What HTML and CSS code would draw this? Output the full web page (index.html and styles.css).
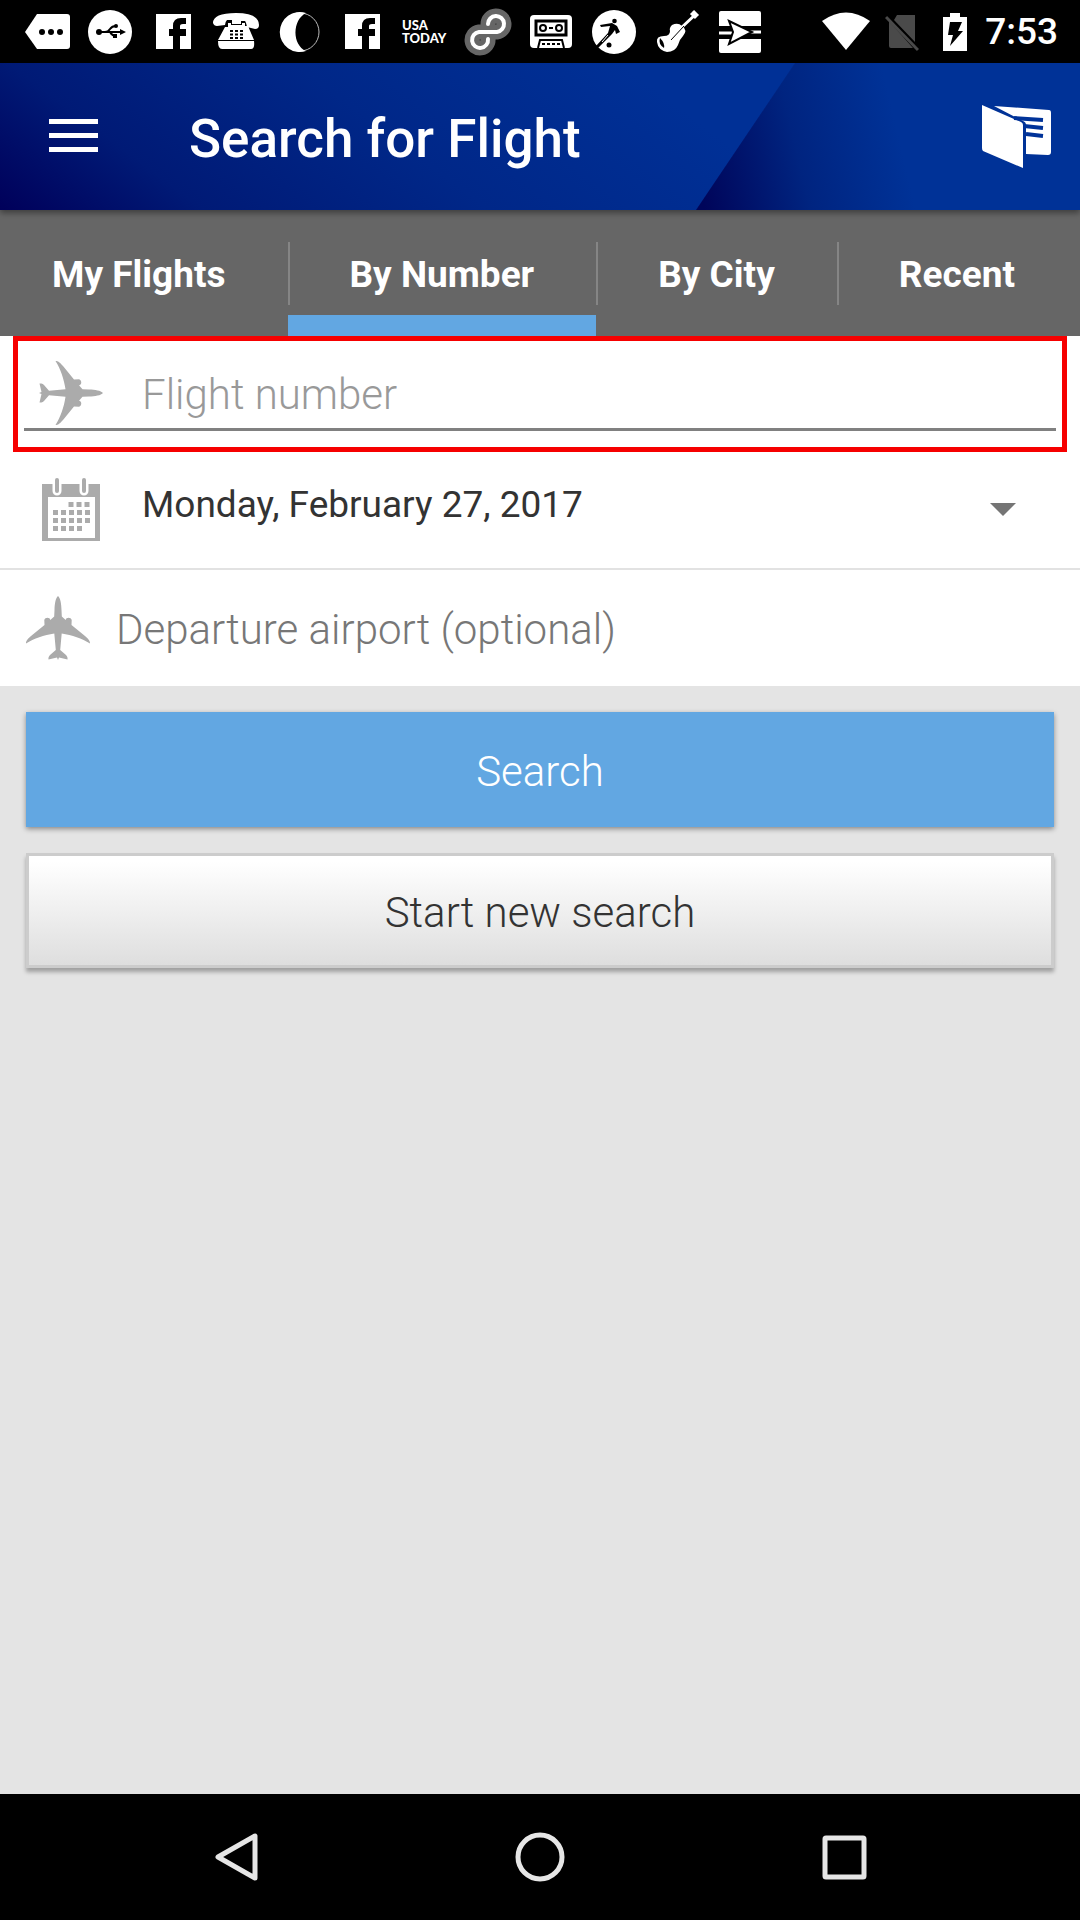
FILE: index.html
```html
<!DOCTYPE html>
<html lang="en">
<head>
<meta charset="utf-8">
<meta name="viewport" content="width=device-width, initial-scale=1">
<title>Search for Flight</title>
<link rel="stylesheet" href="styles.css">
</head>
<body>
<svg class="symbols" aria-hidden="true">
  <symbol id="plane" viewBox="0 0 64 64">
    <path d="M32 0C29.500 2 28.700 8 28.500 14L28.200 20.500 24.300 24C24 21 19 21 18.300 24L18.500 29 5 40C1 43.500 0 45 0 47.500 8 42.500 18 39 28.300 37.500L29.800 54 24 59C22.500 60.500 22.300 62 22.500 63.500L31 61.500 32 64 33 61.500 41.500 63.500C41.700 62 41.500 60.500 40 59L34.200 54 35.700 37.500C46 39 56 42.500 64 47.500 64 45 63 43.500 59 40L45.500 29 45.700 24C45 21 40 21 39.700 24L35.800 20.500 35.500 14C35.300 8 34.500 2 32 0Z"/>
  </symbol>
  <symbol id="social" viewBox="0 0 63 63">
    <path fill="#fff" d="M14 14H49V49H38V36H44V29H38V26Q38 24 41 24H44V18H39Q31 18 31 26V29H27V36H31V49H14Z"/>
  </symbol>
</svg>

<div class="status-bar">
  <div class="notifications">
    <svg class="notice" viewBox="0 0 63 63"><path fill="#fff" d="M21 14H51Q54 14 54 17V46Q54 49 51 49H21L9 32Z"/><g fill="#000"><circle cx="26" cy="32" r="3"/><circle cx="35" cy="32" r="3"/><circle cx="44" cy="32" r="3"/></g></svg>
    <svg class="notice" viewBox="0 0 63 63"><circle cx="31" cy="32" r="22" fill="#fff"/><g fill="none" stroke="#000" stroke-width="2"><path d="M20 32H42M26 32Q29 32 31 29T37 26M31 32Q33 36 38 36"/></g><circle cx="20" cy="32" r="3"/><circle cx="37" cy="26" r="2"/><path d="M41 29L47 32 41 35ZM34 34H38V38H34Z"/></svg>
    <svg class="notice"><use href="#social"/></svg>
    <svg class="notice" viewBox="0 0 63 63"><path fill="#fff" d="M8 23Q8 13 31 13T54 25Q54 29 50 29L42 27Q41 22 40 21H36V24H27V20H22Q20 22 20 25L12 26Q9 26 8 23ZM20 27H23V23H26V25H37V23H40V26H43L49 40H13ZM13 41H49Q50 49 46 49H17Q13 49 13 41Z"/><path d="M25 31H38M25 34.500H38M25 38H38" stroke="#000" stroke-width="2" stroke-dasharray="3 2"/></svg>
    <svg class="notice" viewBox="0 0 63 63"><circle cx="32" cy="32" r="19" fill="#000" stroke="#bbb"/><path fill="#fff" d="M38 13A20 20 0 1 0 38 51C24 45 24 20 38 13Z"/></svg>
    <svg class="notice"><use href="#social"/></svg>
    <div class="notice notice-text">USA<br>TODAY</div>
    <svg class="notice" viewBox="0 0 63 63"><g fill="none" stroke-linecap="round"><path stroke="#666" stroke-width="15" d="M31 39A8 8 0 1 1 22 32H40A8 8 0 1 0 31 24"/><path stroke="#fff" stroke-width="4" d="M31 39A8 8 0 1 1 22 32H40A8 8 0 1 0 31 24"/></g></svg>
    <svg class="notice" viewBox="0 0 63 63"><rect x="10" y="15" width="42" height="33" rx="4" fill="#fff"/><g fill="none" stroke="#000" stroke-width="2"><rect x="16" y="21" width="30" height="14" stroke-width="3"/><circle cx="23" cy="28" r="3"/><circle cx="39" cy="28" r="3"/><path d="M29 28H33M18 48L20 40H42L44 48"/><path d="M22 44H40" stroke-dasharray="3 2"/></g></svg>
    <svg class="notice" viewBox="0 0 63 63"><circle cx="31" cy="32" r="22" fill="#fff"/><circle cx="31.500" cy="21" r="2.300"/><circle cx="26" cy="45" r="2.500"/><path d="M17 25L29 23 34 26 37 32 33 34 32 30 29 34 15 48 13 46 25 33 27 26 18 27Z"/><path stroke="#fff" d="M19 42L25 35"/></svg>
    <svg class="notice" viewBox="0 0 63 63"><path stroke="#fff" stroke-width="3" d="M34 29L51 13M45 13L50 18M47 11L52 16"/><path fill="#fff" d="M26 25Q32 22 36 26 42 30 37 36 33 40 32 45 29 52 21 52 12 50 11 42 10 36 18 36 24 36 24 31 23 28 26 25Z"/><path d="M14 38Q12 44 18 48 19 43 14 38" /><path stroke="#000" d="M25 40L38 26"/></svg>
    <svg class="notice" viewBox="0 0 63 63"><rect x="10" y="11" width="42" height="42" rx="2" fill="#fff"/><path d="M10 26H52V39H10Z"/><path stroke="#fff" stroke-width="3" d="M10 33H24M40 32H52"/><path fill="#fff" stroke="#000" stroke-width="2" d="M20 21L43 32 20 44 24 32Z"/></svg>
  </div>
  <div class="system">
    <svg class="system-wifi" viewBox="0 0 48 40"><path fill="#fff" d="M0 9Q24-8 48 9L24 38Z"/></svg>
    <svg class="system-sim" viewBox="0 0 34 40"><path fill="#4a4a4a" d="M12 3H30V30L9 8ZM4 9L28 36H6Q4 36 4 34Z"/><path stroke="#4a4a4a" stroke-width="3" d="M1 5L33 38"/></svg>
    <svg class="system-battery" viewBox="0 0 24 40"><path fill="#fff" d="M7 1H17V5H24V39H0V5H7Z"/><path d="M7 10H19L15 19H20L7 34 10 23H5Z"/></svg>
    <time class="clock">7:53</time>
  </div>
</div>

<header class="app-bar">
  <svg class="app-bar-art" viewBox="0 0 1080 147" preserveAspectRatio="none" aria-hidden="true">
    <defs>
      <linearGradient id="left-blue" gradientUnits="userSpaceOnUse" x1="0" y1="147" x2="294" y2="-245"><stop offset="0" stop-color="#00005a"/><stop offset=".25" stop-color="#001a76"/><stop offset=".6" stop-color="#002788"/><stop offset="1" stop-color="#003096"/></linearGradient>
      <linearGradient id="right-blue" gradientUnits="userSpaceOnUse" x1="705" y1="147" x2="905" y2="100"><stop offset="0" stop-color="#00055a"/><stop offset=".5" stop-color="#002480"/><stop offset="1" stop-color="#003297"/></linearGradient>
    </defs>
    <path fill="url(#left-blue)" d="M0 0H796L697 147H0Z"/>
    <path fill="url(#right-blue)" d="M795 0H1080V147H696Z"/>
  </svg>
  <button class="icon-button" aria-label="Menu"><svg class="menu-icon" viewBox="0 0 50 36"><path fill="#fff" d="M1 0H50V5H1ZM1 14H50V19H1ZM1 28H50V33H1Z"/></svg></button>
  <h1 class="app-title">Search for Flight</h1>
  <button class="icon-button" aria-label="Boarding passes"><svg class="pass-icon" viewBox="0 0 70 64"><path fill="#fff" d="M0 0L39 17Q41 18 41 20V63L1 46Q0 45 0 43ZM12 1L67 5Q69 5 69 8V47Q69 50 66 50L44 49V20Q44 17 41 16Z"/><path stroke="#039" stroke-width="4" d="M32 13L61 15M42 21L61 23M44 29L61 31"/></svg></button>
</header>

<nav class="tabs" aria-label="Flight search">
  <a class="tab" href="#my-flights">My Flights</a>
  <a class="tab tab-current" href="#by-number" aria-current="page">By Number</a>
  <a class="tab" href="#by-city">By City</a>
  <a class="tab" href="#recent">Recent</a>
</nav>

<main class="content">
  <form class="search-form">
    <div class="fields">
      <div class="flight-highlight">
        <div class="flight-field">
          <label class="field-icon" for="flight" aria-label="Flight number"><svg class="glyph glyph-right"><use href="#plane"/></svg></label>
          <input class="text-input input-muted" id="flight" type="text" placeholder="Flight number">
        </div>
      </div>
      <div class="date-field">
        <label class="field-icon" for="date" aria-label="Flight date"><svg class="glyph" viewBox="0 0 64 64"><path d="M2 6H60V63H2ZM8 19V60H55V19Z" fill-rule="evenodd"/><path d="M17 3V13M44 3V13" stroke="#fff" stroke-width="9" stroke-linecap="round"/><path d="M17 2V13M44 2V13" stroke="#ababab" stroke-width="4" stroke-linecap="round"/><path d="M28.500 26.500H50M13 34.500H50M13 42.500H50M13 50.500H43" stroke="#ababab" stroke-width="5" stroke-dasharray="5 3"/></svg></label>
        <select class="date-select" id="date"><option>Monday, February 27, 2017</option></select>
        <svg class="caret" viewBox="0 0 26 14" aria-hidden="true"><path d="M0 0H26L13 13Z"/></svg>
      </div>
      <div class="airport-field">
        <label class="field-icon" for="airport" aria-label="Departure airport"><svg class="glyph"><use href="#plane"/></svg></label>
        <input class="text-input" id="airport" type="text" placeholder="Departure airport (optional)">
      </div>
    </div>
    <div class="actions">
      <button class="button button-primary" type="submit">Search</button>
      <button class="button button-secondary" type="reset">Start new search</button>
    </div>
  </form>
</main>

<div class="system-nav">
  <button class="nav-button" aria-label="Back"><svg class="nav-icon" viewBox="0 0 50 50"><path d="M44 4V46L7 25Z"/></svg></button>
  <button class="nav-button" aria-label="Home"><svg class="nav-icon" viewBox="0 0 50 50"><circle cx="25" cy="25" r="22"/></svg></button>
  <button class="nav-button" aria-label="Overview"><svg class="nav-icon" viewBox="0 0 50 50"><rect x="6" y="6" width="39" height="39" rx="1"/></svg></button>
</div>
</body>
</html>
```
FILE: styles.css
```css
* {
  box-sizing: border-box;
}

body {
  margin: 0;
  min-height: 100vh;
  display: flex;
  flex-direction: column;
  background: #e4e4e4;
  font-family: Roboto, sans-serif;
}

button,
input,
select {
  font: inherit;
  border: 0;
  border-radius: 0;
}

svg {
  display: block;
}

.symbols {
  position: absolute;
  width: 0;
  height: 0;
}

/* Android status bar */
.status-bar {
  display: flex;
  justify-content: space-between;
  height: 63px;
  padding: 0 22px 0 16px;
  background: #000;
  color: #fff;
}

.notifications {
  display: flex;
}

.notice {
  width: 63px;
  height: 63px;
}

.notice-text {
  padding: 19px 0 0 8px;
  font: 900 13px/13px Lato, sans-serif;
}

.system {
  display: flex;
  align-items: center;
}

.system-wifi {
  width: 48px;
  height: 40px;
}

.system-sim {
  width: 34px;
  height: 40px;
  margin-left: 15px;
}

.system-battery {
  width: 24px;
  height: 40px;
  margin-left: 24px;
}

.clock {
  margin-left: 18px;
  font-size: 37px;
  font-weight: 500;
  line-height: 64px;
}

/* Title bar */
.app-bar {
  position: relative;
  z-index: 1;
  display: flex;
  align-items: center;
  height: 147px;
  padding: 0 28px 0 48px;
  box-shadow: 0 3px 6px rgba(0, 0, 0, 0.4);
}

.app-bar-art {
  position: absolute;
  inset: 0;
  width: 100%;
  height: 100%;
  z-index: -1;
}

.icon-button {
  padding: 0;
  background: none;
}

.menu-icon {
  width: 50px;
  height: 36px;
}

.pass-icon {
  width: 70px;
  height: 64px;
}

.app-title {
  flex: 1;
  margin: 0;
  padding: 4px 0 0 91px;
  color: #fff;
  font-size: 53px;
  font-weight: 500;
}

/* Tabs */
.tabs {
  display: flex;
  height: 126px;
  background: #666;
}

.tab {
  position: relative;
  padding: 0 62px;
  color: #fff;
  font-size: 37px;
  font-weight: 700;
  line-height: 130px;
  text-decoration: none;
  white-space: nowrap;
}

.tab:first-child {
  padding-left: 52px;
}

.tab:last-child {
  flex: 1;
}

.tab + .tab::before {
  content: "";
  position: absolute;
  left: 0;
  top: 32px;
  width: 2px;
  height: 63px;
  background: #858585;
}

.tab-current {
  box-shadow: inset 0 -21px #62a7e2;
}

/* Search form */
.content {
  flex: 1;
}

.fields {
  background: #fff;
}

.flight-highlight {
  margin: 0 13px;
  padding: 0 6px 16px;
  border: 5px solid #f60000;
}

.flight-field,
.date-field,
.airport-field {
  display: flex;
  align-items: center;
}

.flight-field {
  height: 90px;
  padding: 17px 16px 0 15px;
  border-bottom: 3px solid #808080;
  gap: 39px;
}

.date-field {
  height: 118px;
  padding: 0 64px 0 40px;
  border-bottom: 2px solid #e2e2e2;
  gap: 38px;
}

.airport-field {
  height: 116px;
  padding: 0 26px;
  gap: 26px;
}

.glyph {
  width: 64px;
  height: 64px;
  fill: #ababab;
}

.glyph-right {
  transform: rotate(90deg);
}

.text-input,
.date-select {
  flex: 1;
  min-width: 0;
  padding: 0;
  background: none;
  color: #333;
  outline: 0;
}

.text-input {
  padding-top: 3px;
  font-size: 42px;
  font-weight: 300;
}

.text-input::placeholder {
  color: #777;
}

.input-muted::placeholder {
  color: #999;
}

.date-select {
  appearance: none;
  padding-bottom: 12px;
  font-size: 37px;
}

.caret {
  width: 26px;
  height: 14px;
  fill: #757575;
}

.actions {
  display: grid;
  gap: 26px;
  padding: 26px;
}

.button {
  height: 115px;
  padding: 4px 0 0;
  font-size: 42px;
  font-weight: 300;
}

.button-primary {
  background: #62a7e2;
  color: #fff;
  box-shadow: 0 2px 5px rgba(0, 0, 0, 0.4);
}

.button-secondary {
  border: 3px solid #ccc;
  background: linear-gradient(#fff 5%, #dedede);
  color: #333;
  box-shadow: 0 4px 4px rgba(0, 0, 0, 0.3);
}

/* Android navigation bar */
.system-nav {
  display: flex;
  justify-content: center;
  gap: 254px;
  height: 126px;
  background: #000;
}

.nav-button {
  padding: 0;
  background: none;
}

.nav-icon {
  width: 50px;
  height: 50px;
  fill: none;
  stroke: #e6e6e6;
  stroke-width: 5px;
  stroke-linejoin: round;
}
```
